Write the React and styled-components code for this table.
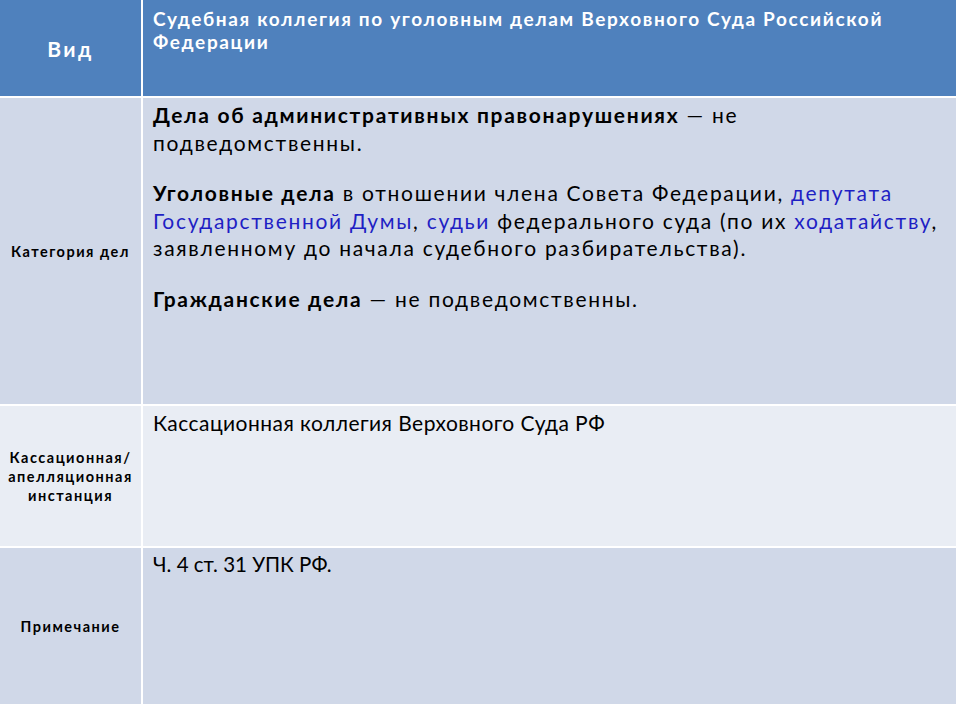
import React from "react";
import styled, { createGlobalStyle } from "styled-components";

const Global = createGlobalStyle`
  html, body { margin: 0; padding: 0; background: #ffffff; }
  body { font-family: "Lato", "Noto Sans", sans-serif; }
`;

const Table = styled.div`
  width: 956px;
  display: grid;
  grid-template-columns: 141px 1fr;
  grid-template-rows: 96px 306px 140px 156px;
  gap: 2px;
  background: #ffffff;
  padding-bottom: 2px;
`;

const HeadCell = styled.div`
  background: #4f81bd;
  color: #ffffff;
  font-weight: 700;
  display: flex;
  align-items: ${(p) => (p.$center ? "center" : "flex-start")};
  justify-content: ${(p) => (p.$center ? "center" : "flex-start")};
  padding: ${(p) => (p.$center ? "0" : "7px 6px 0 10px")};
  font-size: ${(p) => (p.$center ? "21px" : "19px")};
  letter-spacing: ${(p) => (p.$center ? "2.5px" : "1.65px")};
  line-height: 23px;
`;

const LabelCell = styled.div`
  background: ${(p) => (p.$alt ? "#e9edf4" : "#d0d8e8")};
  color: #000;
  font-weight: 700;
  font-size: 14.5px;
  letter-spacing: 1.5px;
  line-height: 19px;
  display: flex;
  align-items: center;
  justify-content: center;
  text-align: center;
  padding: 0 2px;
`;

const BodyCell = styled.div`
  background: ${(p) => (p.$alt ? "#e9edf4" : "#d0d8e8")};
  color: #000;
  font-size: ${(p) => p.$size || "21px"};
  letter-spacing: ${(p) => p.$spacing || "0px"};
  line-height: 27.5px;
  padding: 3px 4px 0 10px;
`;

const Para = styled.p`
  margin: 0 0 23px 0;
`;

const B = styled.b`
  font-weight: 700;
`;

const Link = styled.span`
  color: #1f1fc4;
`;

export default function App() {
  return (
    <>
      <Global />
      <Table>
        <HeadCell $center>Вид</HeadCell>
        <HeadCell>
          Судебная коллегия по уголовным делам Верховного Суда Российской Федерации
        </HeadCell>

        <LabelCell>Категория дел</LabelCell>
        <BodyCell $spacing="1.7px">
          <Para>
            <B>Дела об административных правонарушениях</B> — не подведомственны.
          </Para>
          <Para>
            <B>Уголовные дела</B> в отношении члена Совета Федерации,{" "}
            <Link>депутата Государственной Думы</Link>, <Link>судьи</Link> федерального
            суда (по их <Link>ходатайству</Link>, заявленному до начала судебного
            разбирательства).
          </Para>
          <Para>
            <B>Гражданские дела</B> — не подведомственны.
          </Para>
        </BodyCell>

        <LabelCell $alt>
          Кассационная/
          <br />
          апелляционная
          <br />
          инстанция
        </LabelCell>
        <BodyCell $alt $spacing="0.45px">
          Кассационная коллегия Верховного Суда РФ
        </BodyCell>

        <LabelCell>Примечание</LabelCell>
        <BodyCell $size="20.5px">Ч. 4 ст. 31 УПК РФ.</BodyCell>
      </Table>
    </>
  );
}
